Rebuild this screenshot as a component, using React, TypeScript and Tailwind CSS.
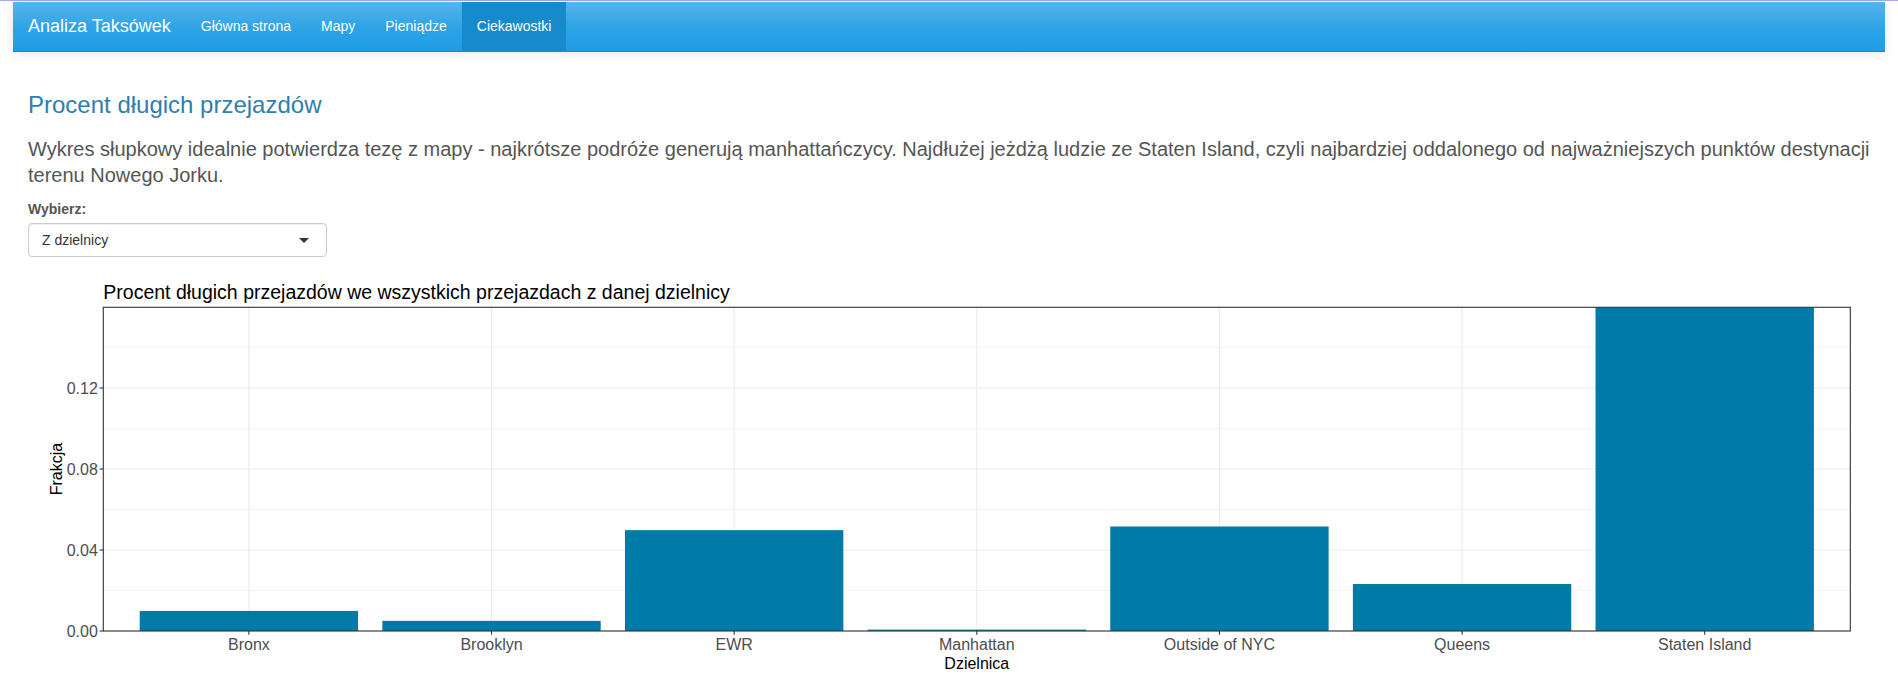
import React from "react";

const FONT = '"Liberation Sans", Arial, Helvetica, sans-serif';

const data: { name: string; value: number }[] = [
  { name: "Bronx", value: 0.0099 },
  { name: "Brooklyn", value: 0.005 },
  { name: "EWR", value: 0.0498 },
  { name: "Manhattan", value: 0.0007 },
  { name: "Outside of NYC", value: 0.0516 },
  { name: "Queens", value: 0.0232 },
  { name: "Staten Island", value: 0.2 },
];

function Chart() {
  const left = 75.3;
  const right = 1822.3;
  const top = 35.3;
  const bottom = 359;
  const pxPerUnit = 2025;
  const unit = (right - left) / 7.2;
  const y = (v: number) => bottom - v * pxPerUnit;
  const cx = (i: number) => left + (i + 0.6) * unit;
  const majors = [0, 0.04, 0.08, 0.12];
  const minors = [0.02, 0.06, 0.1, 0.14];
  const half = unit * 0.45;
  return (
    <svg width={1843} height={400} viewBox="0 0 1843 400" className="block" style={{ fontFamily: FONT }}>
      <text x={75.3} y={27} fontSize={19.5} fill="#000000">
        Procent długich przejazdów we wszystkich przejazdach z danej dzielnicy
      </text>
      <rect x={left} y={top} width={right - left} height={bottom - top} fill="#ffffff" />
      {minors.map((v) => (
        <line key={"mi" + v} x1={left} x2={right} y1={y(v)} y2={y(v)} stroke="#ebebeb" strokeWidth={0.6} />
      ))}
      {majors.map((v) => (
        <line key={"ma" + v} x1={left} x2={right} y1={y(v)} y2={y(v)} stroke="#ebebeb" strokeWidth={1.1} />
      ))}
      {data.map((d, i) => (
        <line key={"vx" + i} x1={cx(i)} x2={cx(i)} y1={top} y2={bottom} stroke="#ebebeb" strokeWidth={1.1} />
      ))}
      {data.map((d, i) => {
        const t = Math.max(y(d.value), top);
        return <rect key={"b" + i} x={cx(i) - half} y={t} width={half * 2} height={bottom - t} fill="#007ba7" />;
      })}
      <rect x={left} y={top} width={right - left} height={bottom - top} fill="none" stroke="#333333" strokeWidth={1.1} />
      {majors.map((v) => (
        <g key={"yt" + v}>
          <line x1={left - 3.7} x2={left} y1={y(v)} y2={y(v)} stroke="#333333" strokeWidth={1.1} />
          <text x={left - 5.5} y={y(v) + 5.7} fontSize={16} fill="#4d4d4d" textAnchor="end">
            {v.toFixed(2)}
          </text>
        </g>
      ))}
      {data.map((d, i) => (
        <g key={"xt" + i}>
          <line x1={cx(i)} x2={cx(i)} y1={bottom} y2={bottom + 3.7} stroke="#333333" strokeWidth={1.1} />
          <text x={cx(i)} y={378} fontSize={16} fill="#4d4d4d" textAnchor="middle">
            {d.name}
          </text>
        </g>
      ))}
      <text x={(left + right) / 2} y={397} fontSize={16} fill="#000000" textAnchor="middle">
        Dzielnica
      </text>
      <text
        x={0}
        y={0}
        fontSize={16}
        fill="#000000"
        textAnchor="middle"
        transform={`translate(34 ${(top + bottom) / 2}) rotate(-90)`}
      >
        Frakcja
      </text>
    </svg>
  );
}

export default function App() {
  const links = ["Główna strona", "Mapy", "Pieniądze"];
  return (
    <div className="min-h-[687px] bg-white" style={{ fontFamily: FONT }}>
      <div className="h-px bg-[#a5a9ea]" />
      <div className="px-[13px] pt-px">
        <nav className="flex h-[50px] items-stretch border-b border-[#178acc] bg-gradient-to-b from-[#54b4eb] via-[#2fa4e7] to-[#1d9ce5] shadow-[0_1px_10px_rgba(0,0,0,0.1)]">
          <div className="flex items-center px-[15px] text-[18px] text-white">Analiza Taksówek</div>
          <ul className="flex items-stretch">
            {links.map((l) => (
              <li key={l} className="flex items-center px-[15px] text-[14px] text-white">
                {l}
              </li>
            ))}
            <li className="flex items-center bg-[#178acc] px-[15px] text-[14px] text-white">Ciekawostki</li>
          </ul>
        </nav>
      </div>
      <div className="px-[28px]">
        <h3 className="mt-[40px] text-[24px] leading-[1.1] text-[#317eac]">Procent długich przejazdów</h3>
        <p className="mt-[18px] mb-[11px] text-[20px] leading-[26px] text-[#555555]">
          Wykres słupkowy idealnie potwierdza tezę z mapy - najkrótsze podróże generują manhattańczycy. Najdłużej jeżdżą
          ludzie ze Staten Island, czyli najbardziej oddalonego od najważniejszych punktów destynacji terenu Nowego Jorku.
        </p>
        <div className="mb-[4px] text-[14px] font-bold leading-[20px] text-[#555555]">Wybierz:</div>
        <div className="relative flex h-[34px] w-[299px] items-center rounded-[4px] border border-[#cccccc] bg-white pl-[13px] text-[14px] text-[#333333] shadow-[inset_0_1px_1px_rgba(0,0,0,0.075)]">
          Z dzielnicy
          <span className="absolute right-[17px] top-[14px] h-0 w-0 border-x-[5px] border-t-[5px] border-x-transparent border-t-[#333333]" />
        </div>
        <div className="mt-[15px]">
          <Chart />
        </div>
      </div>
    </div>
  );
}
